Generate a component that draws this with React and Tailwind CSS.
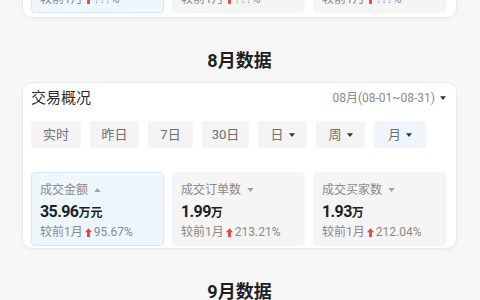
import React from 'react';

const tabs = [
  { label: '实时', w: 'w-[50px]' },
  { label: '昨日', w: 'w-[49px]' },
  { label: '7日', w: 'w-[45px]' },
  { label: '30日', w: 'w-[47px]' },
  { label: '日', w: 'w-[49px]', caret: true },
  { label: '周', w: 'w-[49px]', caret: true },
  { label: '月', w: 'w-[52px]', caret: true, active: true },
];

const Caret = ({ className = '' }) => (
  <svg viewBox="0 0 8 5" className={`w-[6px] h-[4px] ${className}`}>
    <path d="M0 0 H8 L4 5 Z" fill="#333" />
  </svg>
);

const SortMark = ({ up }) => (
  <svg viewBox="0 0 8 5" className="w-[7px] h-[4px] ml-[6px]">
    <path d={up ? 'M4 0 L8 5 H0 Z' : 'M0 0 H8 L4 5 Z'} fill="#a3a3a3" />
  </svg>
);

const RedUp = () => (
  <svg viewBox="0 0 8 10" className="w-[7px] h-[9px] mx-[2px]">
    <path d="M4 0 L8 4.8 H5.6 V10 H2.4 V4.8 H0 Z" fill="#e5453b" />
  </svg>
);

const StatCard = ({ title, value, unit, change, active, prev }) => (
  <div
    className={`flex-1 h-[74px] rounded-[4px] border pl-2 pt-[9px] ${prev ? 'pb-[5px]' : 'pb-[2px]'} ${
      active ? 'bg-[#eef7fd] border-[#d3e8f4]' : 'bg-[#f5f5f5] border-transparent'
    }`}
  >
    <div className="flex items-center h-[16px] text-[12px] leading-[16px] text-[#8a8a8a]">
      <span>{title}</span>
      <SortMark up={active} />
    </div>
    <div className="mt-[3px] h-[22px] flex items-baseline text-[#1f1f1f] font-bold">
      <span className="text-[16px] leading-[22px] tracking-[-0.6px]">{value}</span>
      <span className="text-[12px] leading-[22px]">{unit}</span>
    </div>
    <div className="flex items-center h-[18px] text-[12px] leading-[18px] text-[#8a8a8a]">
      <span>较前1月</span>
      <RedUp />
      <span>{change}</span>
    </div>
  </div>
);

const OverviewCard = ({ range, stats, prev }) => (
  <div
    className={`rounded-[10px] border border-[#ebebeb] bg-white shadow-[0_1px_3px_rgba(0,0,0,0.04)] pl-2 pr-[10px] pt-[5px] ${
      prev ? 'pb-[4px] -mt-[151px]' : 'pb-[2px]'
    }`}
  >
    <div className="flex items-center justify-between h-[20px]">
      <span className="text-[15px] leading-[20px] text-[#2a2a2a]">交易概况</span>
      <div className="flex items-center gap-[5px] text-[12px] text-[#8a8a8a]">
        <span>{range}</span>
        <Caret />
      </div>
    </div>
    <div className="mt-[13px] flex gap-[9px]">
      {tabs.map((t) => (
        <div
          key={t.label}
          className={`${t.w} h-[27px] rounded-[3px] flex items-center justify-center gap-[5px] text-[13px] text-[#707070] ${
            t.active ? 'bg-[#eef6fc]' : 'bg-[#f4f4f4]'
          }`}
        >
          <span>{t.label}</span>
          {t.caret && <Caret />}
        </div>
      ))}
    </div>
    <div className="mt-6 flex gap-2">
      {stats.map((s, i) => (
        <StatCard key={s.title} {...s} active={i === 0} prev={prev} />
      ))}
    </div>
  </div>
);

const SectionTitle = ({ children }) => (
  <div className="mt-[30px] mb-2 h-[26px] text-center text-[18px] leading-[26px] font-bold text-[#1f1f1f]">
    {children}
  </div>
);

export default function App() {
  return (
    <div className="min-h-screen w-full overflow-hidden bg-[#f7f7f7] px-[22px] pr-[23px] font-[family-name:Roboto,'Noto_Sans_CJK_SC',sans-serif]">
      <OverviewCard
        prev
        range="07月(07-01~07-31)"
        stats={[
          { title: '成交金额', value: '??.??', unit: '万元', change: '???%' },
          { title: '成交订单数', value: '?.??', unit: '万', change: '???%' },
          { title: '成交买家数', value: '?.??', unit: '万', change: '???%' },
        ]}
      />
      <SectionTitle>8月数据</SectionTitle>
      <OverviewCard
        range="08月(08-01~08-31)"
        stats={[
          { title: '成交金额', value: '35.96', unit: '万元', change: '95.67%' },
          { title: '成交订单数', value: '1.99', unit: '万', change: '213.21%' },
          { title: '成交买家数', value: '1.93', unit: '万', change: '212.04%' },
        ]}
      />
      <SectionTitle>9月数据</SectionTitle>
    </div>
  );
}
